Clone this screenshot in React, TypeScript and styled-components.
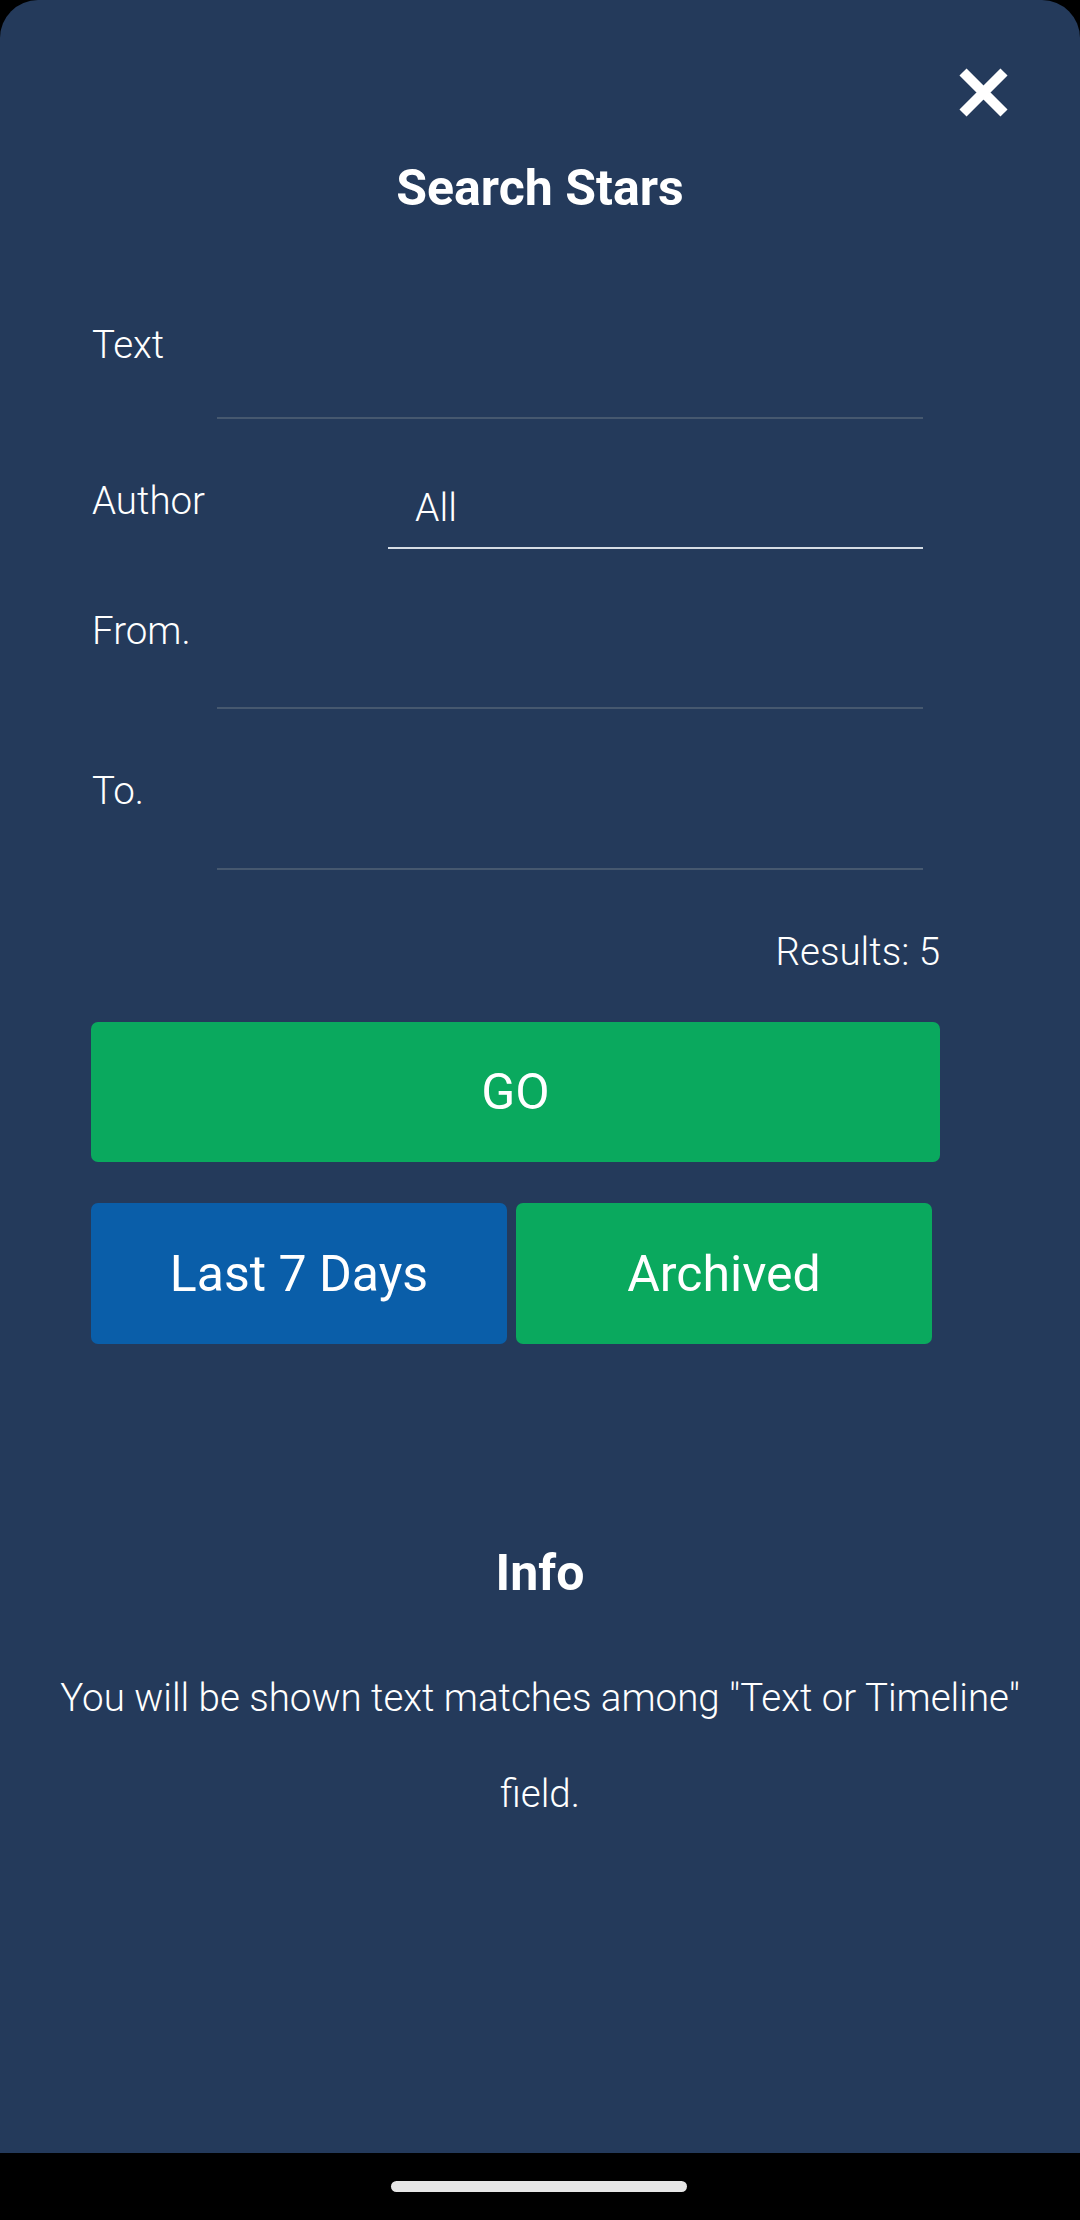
import React from "react";
import styled, { createGlobalStyle } from "styled-components";

const GlobalStyle = createGlobalStyle`
  html, body {
    margin: 0;
    padding: 0;
    background: #000000;
  }
  body {
    font-family: Roboto, "Noto Sans", "Liberation Sans", sans-serif;
    color: #ffffff;
  }
  * {
    box-sizing: border-box;
  }
`;

const Screen = styled.div`
  width: 1080px;
  height: 2220px;
  display: flex;
  flex-direction: column;
  background: #000000;
`;

const Sheet = styled.div`
  flex: 1;
  display: flex;
  flex-direction: column;
  background: #243a5b;
  border-radius: 38px 38px 0 0;
  padding: 0 140px 0 91px;
`;

const CloseRow = styled.div`
  display: flex;
  justify-content: flex-end;
  margin-right: -71px;
  padding-top: 65px;
`;

const CloseButton = styled.button`
  width: 55px;
  height: 55px;
  padding: 0;
  border: none;
  background: transparent;
  display: flex;
  align-items: center;
  justify-content: center;
  cursor: pointer;
`;

const Title = styled.h1`
  margin: 40px -140px 0 -91px;
  font-size: 50px;
  line-height: 56px;
  font-weight: 700;
  text-align: center;
  color: #ffffff;
`;

const Form = styled.div`
  display: flex;
  flex-direction: column;
  gap: 59px;
  margin-top: 106px;
  padding: 0 17px 0 1px;
`;

const Row = styled.div`
  display: flex;
  align-items: flex-start;
`;

const Label = styled.div<{ $w: number }>`
  width: ${(p) => p.$w}px;
  flex-shrink: 0;
  font-size: 38.5px;
  line-height: 46px;
  font-weight: 300;
  color: #ffffff;
`;

const Field = styled.div<{ $h: number; $active?: boolean }>`
  flex: 1;
  height: ${(p) => p.$h}px;
  padding: 7px 0 0 27px;
  border-bottom: 2px solid ${(p) => (p.$active ? "#d6dce4" : "#46586f")};
  font-size: 39px;
  line-height: 46px;
  font-weight: 300;
  color: #ffffff;
`;

const Results = styled.div`
  margin-top: 59px;
  text-align: right;
  font-size: 38.5px;
  line-height: 46px;
  font-weight: 300;
`;

const ActionButton = styled.button<{ $tone: "green" | "blue" }>`
  height: 140px;
  border: none;
  border-radius: 7px;
  background: ${(p) => (p.$tone === "green" ? "#0aa95e" : "#0a5ea9")};
  color: #ffffff;
  font-family: Roboto, "Noto Sans", "Liberation Sans", sans-serif;
  font-size: 50px;
  font-weight: 400;
  display: flex;
  align-items: center;
  justify-content: center;
  padding: 0;
  cursor: pointer;
`;

const GoButton = styled(ActionButton)`
  width: 100%;
  margin-top: 47px;
`;

const QuickRow = styled.div`
  display: flex;
  gap: 9px;
  width: 841px;
  margin-top: 41px;
`;

const QuickButton = styled(ActionButton)`
  flex: 1;
  height: 141px;
`;

const InfoTitle = styled.h2`
  margin: 201px -140px 0 -91px;
  font-size: 50px;
  line-height: 56px;
  font-weight: 700;
  text-align: center;
`;

const InfoText = styled.p`
  margin: 49px -100px 0 -51px;
  padding: 0;
  font-size: 38.5px;
  line-height: 96px;
  font-weight: 300;
  text-align: center;
`;

const NavBar = styled.div`
  height: 67px;
  flex-shrink: 0;
  display: flex;
  justify-content: center;
  padding-top: 28px;
  padding-right: 2px;
`;

const HomePill = styled.div`
  width: 296px;
  height: 11px;
  border-radius: 6px;
  background: #e6e6e6;
`;

function CloseIcon() {
  return (
    <svg width="55" height="55" viewBox="0 0 55 55">
      <path d="M7 7 L48 48 M48 7 L7 48" stroke="#ffffff" strokeWidth="10" strokeLinecap="butt" />
    </svg>
  );
}

export default function App() {
  return (
    <>
      <GlobalStyle />
      <Screen>
        <Sheet>
          <CloseRow>
            <CloseButton aria-label="Close">
              <CloseIcon />
            </CloseButton>
          </CloseRow>
          <Title>Search Stars</Title>

          <Form>
            <Row>
              <Label $w={125}>Text</Label>
              <Field $h={97} />
            </Row>
            <Row>
              <Label $w={296}>Author</Label>
              <Field $h={71} $active>All</Field>
            </Row>
            <Row>
              <Label $w={125}>From.</Label>
              <Field $h={101} />
            </Row>
            <Row>
              <Label $w={125}>To.</Label>
              <Field $h={102} />
            </Row>
          </Form>

          <Results>Results: 5</Results>

          <GoButton $tone="green">GO</GoButton>

          <QuickRow>
            <QuickButton $tone="blue">Last 7 Days</QuickButton>
            <QuickButton $tone="green">Archived</QuickButton>
          </QuickRow>

          <InfoTitle>Info</InfoTitle>
          <InfoText>You will be shown text matches among "Text or Timeline" field.</InfoText>
        </Sheet>
        <NavBar>
          <HomePill />
        </NavBar>
      </Screen>
    </>
  );
}
